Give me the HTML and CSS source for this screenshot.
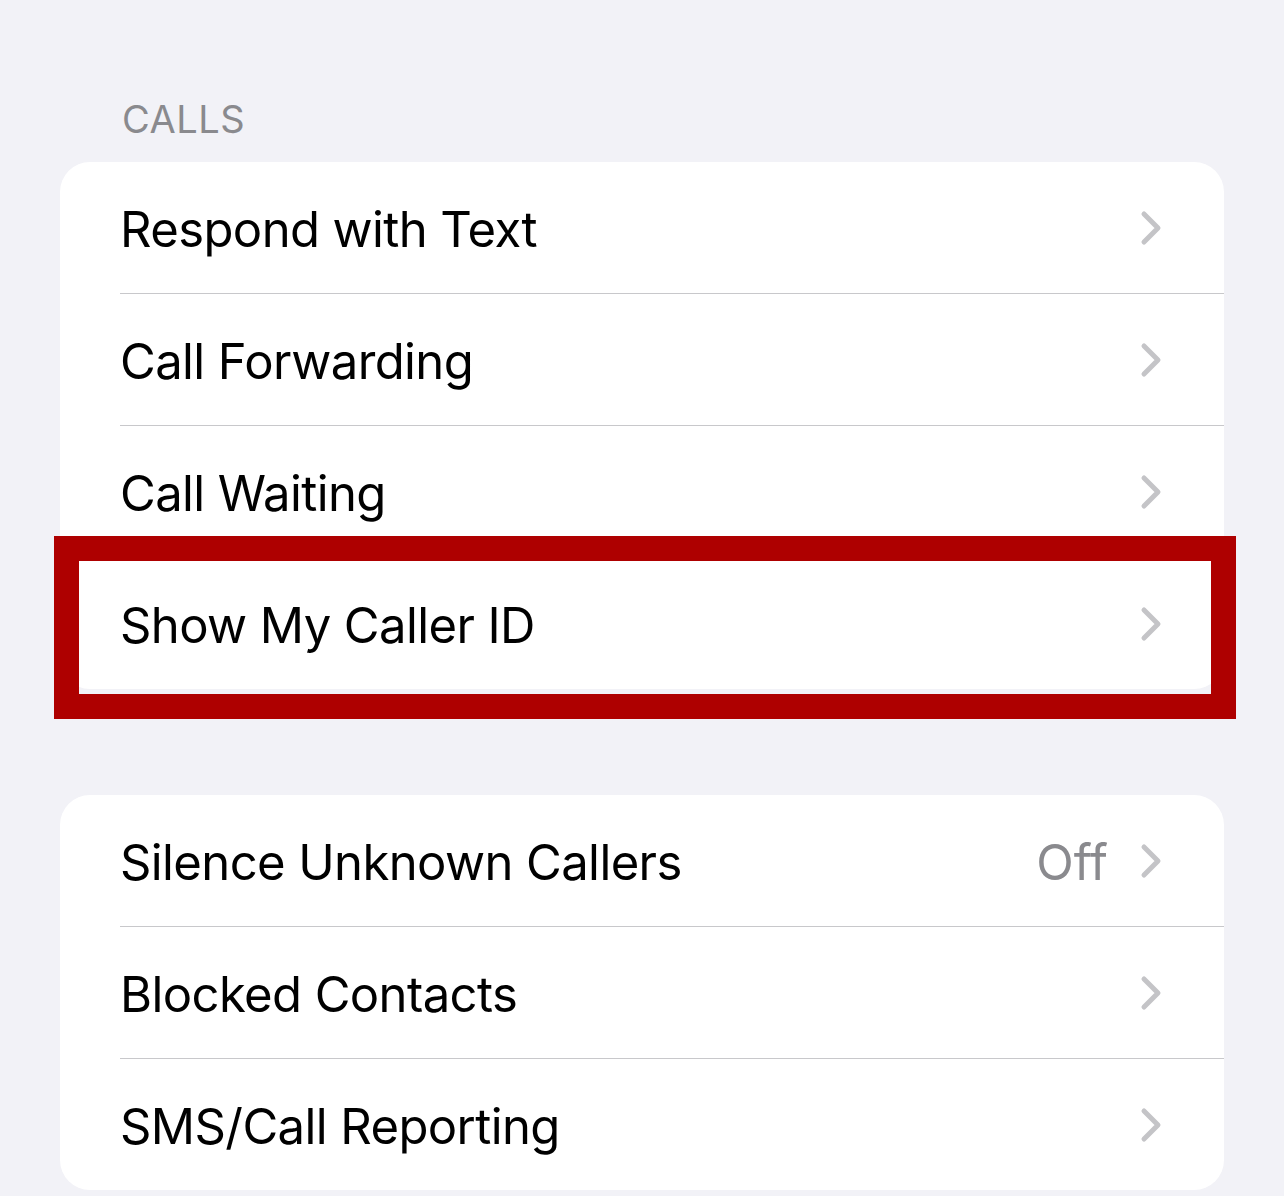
FILE: index.html
```html
<!DOCTYPE html>
<html lang="en">
<head>
    <meta charset="UTF-8">
    <meta name="viewport" content="width=device-width, initial-scale=1.0">
    <title>Phone</title>
    <link rel="stylesheet" href="styles.css">
</head>
<body>
    <div class="settings">
        <!-- Calls group -->
        <div class="group-title">CALLS</div>
        <div class="group">
            <div class="row">
                <span class="row-label">Respond with Text</span>
                <svg class="chevron" viewBox="0 0 22 36"><path d="M4 4 L18 18 L4 32"/></svg>
            </div>
            <div class="row">
                <span class="row-label">Call Forwarding</span>
                <svg class="chevron" viewBox="0 0 22 36"><path d="M4 4 L18 18 L4 32"/></svg>
            </div>
            <div class="row">
                <span class="row-label">Call Waiting</span>
                <svg class="chevron" viewBox="0 0 22 36"><path d="M4 4 L18 18 L4 32"/></svg>
            </div>
            <div class="row marked">
                <span class="row-label">Show My Caller ID</span>
                <svg class="chevron" viewBox="0 0 22 36"><path d="M4 4 L18 18 L4 32"/></svg>
                <div class="highlight"></div>
            </div>
        </div>

        <!-- Blocking group -->
        <div class="group second">
            <div class="row">
                <span class="row-label">Silence Unknown Callers</span>
                <span class="row-value">Off</span>
                <svg class="chevron" viewBox="0 0 22 36"><path d="M4 4 L18 18 L4 32"/></svg>
            </div>
            <div class="row">
                <span class="row-label">Blocked Contacts</span>
                <svg class="chevron" viewBox="0 0 22 36"><path d="M4 4 L18 18 L4 32"/></svg>
            </div>
            <div class="row">
                <span class="row-label">SMS/Call Reporting</span>
                <svg class="chevron" viewBox="0 0 22 36"><path d="M4 4 L18 18 L4 32"/></svg>
            </div>
        </div>
    </div>
</body>
</html>
```

FILE: styles.css
```css
:root {
    --bg-color: #f2f2f7;
    --card-color: #ffffff;
    --text-color: #000000;
    --muted-color: #8a8a8e;
    --chevron-color: #c4c4c7;
    --separator-color: #c8c8cb;
    --mark-color: #ae0000;
}

html, body {
    margin: 0;
    padding: 0;
    height: 100%;
    overflow: hidden;
}

body {
    font-family: Inter, 'Noto Sans', sans-serif;
    background-color: var(--bg-color);
    color: var(--text-color);
}

.settings {
    padding: 0 60px;
}

.group-title {
    height: 162px;
    padding: 97px 0 0 62px;
    box-sizing: border-box;
    font-size: 38px;
    line-height: 44px;
    color: var(--muted-color);
    letter-spacing: 0.5px;
}

.group {
    background: var(--card-color);
    border-radius: 30px;
}

.group.second {
    margin-top: 106px;
}

.row {
    position: relative;
    display: flex;
    align-items: center;
    height: 132px;
    margin-left: 60px;
    padding-right: 62px;
    border-top: 1px solid var(--separator-color);
    box-sizing: border-box;
}

.row:first-child {
    border-top: none;
    height: 131px;
}

.row-label {
    flex: 1;
    font-size: 49px;
    letter-spacing: -0.6px;
    padding-top: 3px;
}

.row-value {
    font-size: 49px;
    color: var(--muted-color);
    margin-right: 32px;
    padding-top: 3px;
}

.chevron {
    width: 22px;
    height: 36px;
    fill: none;
    stroke: var(--chevron-color);
    stroke-width: 5px;
    stroke-linecap: round;
    stroke-linejoin: round;
}

/* red marker frame drawn over the row */
.highlight {
    position: absolute;
    left: -66px;
    right: -12px;
    top: -22px;
    bottom: -30px;
    border: 25px solid var(--mark-color);
    pointer-events: none;
}
```
